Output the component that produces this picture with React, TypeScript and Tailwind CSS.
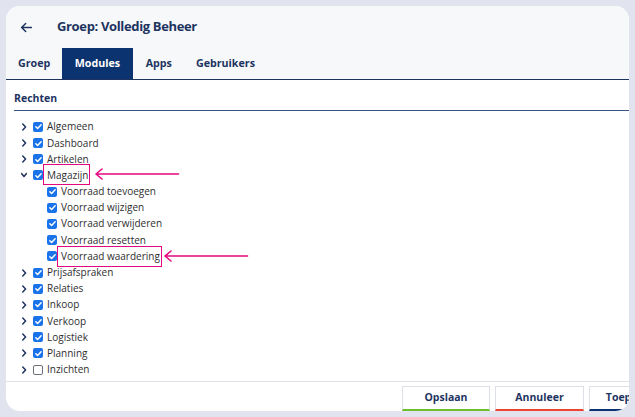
import React from "react";

type Node = { label: string; checked: boolean; open?: boolean; children?: string[] };

const tree: Node[] = [
  { label: "Algemeen", checked: true },
  { label: "Dashboard", checked: true },
  { label: "Artikelen", checked: true },
  {
    label: "Magazijn",
    checked: true,
    open: true,
    children: [
      "Voorraad toevoegen",
      "Voorraad wijzigen",
      "Voorraad verwijderen",
      "Voorraad resetten",
      "Voorraad waardering",
    ],
  },
  { label: "Prijsafspraken", checked: true },
  { label: "Relaties", checked: true },
  { label: "Inkoop", checked: true },
  { label: "Verkoop", checked: true },
  { label: "Logistiek", checked: true },
  { label: "Planning", checked: true },
  { label: "Inzichten", checked: false },
];

const Check = ({ checked }: { checked: boolean }) =>
  checked ? (
    <span className="w-[10px] h-[10px] rounded-[2px] bg-[#1a73e8] flex items-center justify-center shrink-0">
      <svg viewBox="0 0 12 12" className="w-[9px] h-[9px]" fill="none" stroke="white" strokeWidth={2} strokeLinecap="round" strokeLinejoin="round">
        <path d="M2.5 6.3l2.3 2.3 4.7-5" />
      </svg>
    </span>
  ) : (
    <span className="w-[10px] h-[10px] rounded-[2px] border border-[#6b6f76] bg-white shrink-0" />
  );

const Chevron = ({ open }: { open?: boolean }) => (
  <svg viewBox="0 0 6 10" className="w-[6px] h-[10px] shrink-0" fill="none" stroke="#1d3461" strokeWidth={1.5} strokeLinecap="round" strokeLinejoin="round">
    {open ? <path d="M0.5 3.5l2.5 3 2.5-3" /> : <path d="M1.8 2l2.8 3-2.8 3" />}
  </svg>
);

const Arrow = ({ className }: { className: string }) => (
  <svg className={className} viewBox="0 0 85 12" fill="none" stroke="#e5077f" strokeWidth={1.6} strokeLinecap="round" strokeLinejoin="round">
    <path d="M1.5 6h82.5M7.5 1L1.5 6l6 5" />
  </svg>
);

export default function App() {
  return (
    <div className="w-[635px] h-[417px] bg-[#e1e4ef] p-[6px] font-['Open_Sans',sans-serif]">
      <div className="w-full h-full bg-white rounded-[14px] overflow-hidden flex flex-col relative">
        {/* header */}
        <div className="bg-[#f7f8fa] border-b border-[#1d3461]">
          <div className="h-[42px] flex items-center pl-[14px] gap-[24px]">
            <svg viewBox="0 0 16 16" className="w-[13px] h-[13px]" fill="none" stroke="#1d3461" strokeWidth={1.8} strokeLinecap="round" strokeLinejoin="round">
              <path d="M14 8H2.5M7 3L2 8l5 5" />
            </svg>
            <h1 className="text-[13px] font-bold text-[#1d3461] tracking-[-0.35px]">Groep: Volledig Beheer</h1>
          </div>
          <div className="flex h-[31px] text-[10.7px] font-bold text-[#1d3461]">
            <div className="px-[12px] flex items-center">Groep</div>
            <div className="px-[12.5px] flex items-center bg-[#0a3370] text-white">Modules</div>
            <div className="px-[13px] flex items-center">Apps</div>
            <div className="px-[11px] flex items-center">Gebruikers</div>
          </div>
        </div>

        {/* content */}
        <div className="flex-1 pl-[8px] pt-[11px]">
          <div className="text-[10.5px] font-bold text-[#1d3461] pb-[3px] border-b border-[#3b5683]">Rechten</div>
          <div className="pt-[8px] text-[10px] text-[#2e2e2e]">
            {tree.map((n) => (
              <React.Fragment key={n.label}>
                <div className="h-[16.2px] flex items-center pl-[7px] gap-[6px]">
                  <Chevron open={n.open} />
                  <Check checked={n.checked} />
                  <span className="ml-[-2px]">{n.label}</span>
                </div>
                {n.children?.map((c) => (
                  <div key={c} className="h-[16.2px] flex items-center pl-[33px] gap-[4px]">
                    <Check checked />
                    <span>{c}</span>
                  </div>
                ))}
              </React.Fragment>
            ))}
          </div>
        </div>

        {/* footer */}
        <div className="h-[30px] border-t border-[#dfe2ea] flex gap-[5px] pl-[396px] pt-[4px] shrink-0 text-[10.5px] font-bold text-[#1d3461]">
          <button className="w-[88px] h-[25px] shrink-0 bg-white border border-[#dcdfe6] border-b-2 border-b-[#6cbf2a]">Opslaan</button>
          <button className="w-[89px] h-[25px] shrink-0 bg-white border border-[#dcdfe6] border-b-2 border-b-[#f0432f]">Annuleer</button>
          <button className="w-[89px] h-[25px] shrink-0 bg-white border border-[#dcdfe6] border-b-2 border-b-[#0a3370]">Toepassen</button>
        </div>

        {/* annotations */}
        <div className="absolute left-[37px] top-[158px] w-[47px] h-[21px] border-[1.5px] border-[#e5077f]" />
        <Arrow className="absolute left-[88px] top-[162px] w-[86px] h-[12px]" />
        <div className="absolute left-[51px] top-[240px] w-[105px] h-[21px] border-[1.5px] border-[#e5077f]" />
        <Arrow className="absolute left-[157px] top-[244px] w-[86px] h-[12px]" />
      </div>
    </div>
  );
}
